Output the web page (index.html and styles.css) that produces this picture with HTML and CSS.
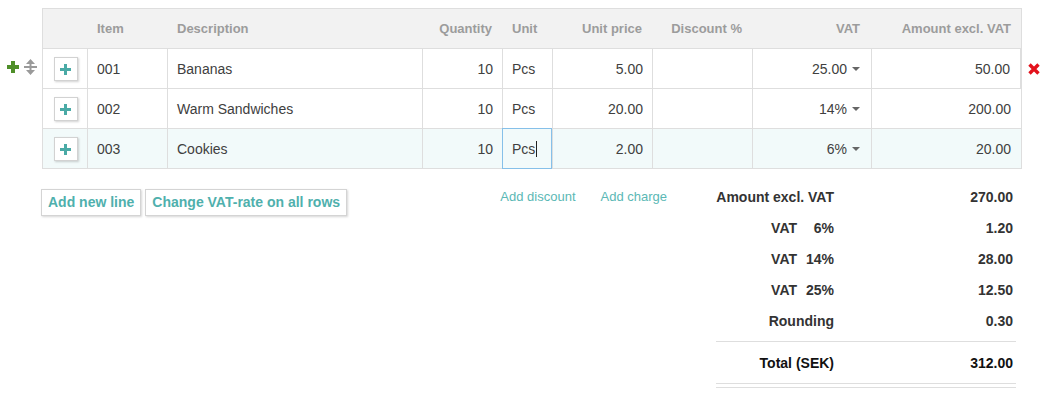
FILE: index.html
```html
<!DOCTYPE html>
<html lang="en">
<head>
<meta charset="utf-8">
<title>Invoice rows</title>
<link rel="stylesheet" href="styles.css">
</head>
<body>
<div class="page">
  <div class="grid">
    <div class="row head">
      <div class="c"></div>
      <div class="c">Item</div>
      <div class="c">Description</div>
      <div class="c r">Quantity</div>
      <div class="c">Unit</div>
      <div class="c r">Unit price</div>
      <div class="c r">Discount %</div>
      <div class="c r vat">VAT</div>
      <div class="c r">Amount excl. VAT</div>
    </div>

    <div class="row line first">
      <div class="tools">
        <svg class="gplus" width="12" height="12" viewBox="0 0 12 12"><path d="M6 0v12M0 6h12" stroke="#4f8f29" stroke-width="4"/></svg>
        <svg class="move" width="15" height="16" viewBox="0 0 15 16"><path d="M7.5 0L12 5H3z M7.5 16L12 11H3z" fill="#9a9a9a"/><rect x="6.5" y="4" width="2" height="8" fill="#9a9a9a"/><rect x="1" y="7" width="13" height="2" fill="#9a9a9a"/></svg>
      </div>
      <div class="c ctr"><span class="addbtn"><svg width="11" height="11" viewBox="0 0 11 11"><path d="M5.5 0v11M0 5.5h11" stroke="#4aaaa6" stroke-width="3"/></svg></span></div>
      <div class="c">001</div>
      <div class="c">Bananas</div>
      <div class="c r">10</div>
      <div class="c">Pcs</div>
      <div class="c r">5.00</div>
      <div class="c r"></div>
      <div class="c r vat">25.00<span class="dd"></span></div>
      <div class="c r">50.00</div>
      <svg class="del" width="12" height="12" viewBox="0 0 12 12"><path d="M1.5 1.5l9 9M10.5 1.5l-9 9" stroke="#e3121c" stroke-width="3.4"/></svg>
    </div>

    <div class="row line">
      <div class="c ctr"><span class="addbtn"><svg width="11" height="11" viewBox="0 0 11 11"><path d="M5.5 0v11M0 5.5h11" stroke="#4aaaa6" stroke-width="3"/></svg></span></div>
      <div class="c">002</div>
      <div class="c">Warm Sandwiches</div>
      <div class="c r">10</div>
      <div class="c">Pcs</div>
      <div class="c r">20.00</div>
      <div class="c r"></div>
      <div class="c r vat">14%<span class="dd"></span></div>
      <div class="c r">200.00</div>
    </div>

    <div class="row line active last">
      <div class="c ctr"><span class="addbtn"><svg width="11" height="11" viewBox="0 0 11 11"><path d="M5.5 0v11M0 5.5h11" stroke="#4aaaa6" stroke-width="3"/></svg></span></div>
      <div class="c">003</div>
      <div class="c">Cookies</div>
      <div class="c r">10</div>
      <div class="c focus">Pcs<span class="cursor"></span></div>
      <div class="c r">2.00</div>
      <div class="c r"></div>
      <div class="c r vat">6%<span class="dd"></span></div>
      <div class="c r">20.00</div>
    </div>
  </div>

  <div class="footer">
    <div class="left">
      <div class="buttons">
        <span class="btn">Add new line</span>
        <span class="btn">Change VAT-rate on all rows</span>
      </div>
      <div class="links">
        <span class="link">Add discount</span>
        <span class="link">Add charge</span>
      </div>
    </div>
    <div class="totals">
      <div class="trow"><div class="lbl">Amount excl. VAT</div><div class="val">270.00</div></div>
      <div class="trow"><div class="lbl">VAT<span class="pct">6%</span></div><div class="val">1.20</div></div>
      <div class="trow"><div class="lbl">VAT<span class="pct">14%</span></div><div class="val">28.00</div></div>
      <div class="trow"><div class="lbl">VAT<span class="pct">25%</span></div><div class="val">12.50</div></div>
      <div class="trow"><div class="lbl">Rounding</div><div class="val">0.30</div></div>
      <div class="trow total"><div class="lbl">Total (SEK)</div><div class="val">312.00</div></div>
      <div class="dbl"></div>
    </div>
  </div>
</div>
</body>
</html>
```

FILE: styles.css
```css
* { box-sizing: border-box; }
html, body { margin: 0; padding: 0; background: #fff; }
body {
  font-family: "Liberation Sans", Arial, sans-serif;
  font-size: 14px;
  color: #404040;
}
.page { padding: 8px 0 0 42px; }

.grid {
  width: 980px;
  border: 1px solid #dedede;
}
.row {
  display: grid;
  grid-template-columns: 45px 80px 255px 80px 50px 100px 100px 119px 149px;
  height: 40px;
  border-bottom: 1px solid #dedede;
  position: relative;
}
.row.last { height: 39px; border-bottom: none; }
.row.head {
  background: #f2f2f2;
}
.c {
  border-right: 1px solid #dedede;
  padding: 0 9px;
  line-height: 40px;
  white-space: nowrap;
  position: relative;
}
.c:last-child { border-right: none; }
.c.r { text-align: right; }
.c.vat { padding-right: 11px; }
.head .c {
  border-right-color: transparent;
  font-size: 13px;
  font-weight: bold;
  color: #9c9c9c;
  line-height: 39px;
}
.head .c.r { padding-right: 10px; }
.head .c.vat { padding-right: 11px; }
.row.line .c.r:last-of-type { padding-right: 10px; }

.row.active { background: #f2fafa; }

.ctr { display: flex; align-items: center; justify-content: center; padding: 0; }
.addbtn {
  width: 24px;
  height: 24px;
  border: 1px solid #d2d2d2;
  background: #fff;
  box-shadow: 1px 1px 2px rgba(0, 0, 0, 0.18);
  display: flex;
  align-items: center;
  justify-content: center;
  margin-left: 1px;
}
.addbtn svg { display: block; }

.dd {
  display: inline-block;
  width: 0;
  height: 0;
  margin-left: 5px;
  vertical-align: middle;
  border-left: 4px solid transparent;
  border-right: 4px solid transparent;
  border-top: 4px solid #666;
  position: relative;
  top: -1px;
}

.focus::after {
  content: "";
  position: absolute;
  top: -1px;
  left: -1px;
  right: 0;
  bottom: 0;
  border: 1px solid #86c0e9;
}
.cursor {
  display: inline-block;
  width: 1px;
  height: 16px;
  background: #222;
  vertical-align: middle;
  margin-left: 1px;
  position: relative;
  top: -1px;
}

.tools {
  position: absolute;
  left: -36px;
  top: 10px;
  display: flex;
  align-items: center;
  gap: 4px;
}
.tools svg { display: block; }
.del {
  position: absolute;
  left: 985px;
  top: 14px;
}

.footer {
  display: flex;
  margin: 13px 0 0 -1px;
}
.left {
  width: 675px;
  display: flex;
  align-items: flex-start;
  padding-right: 49px;
}
.buttons {
  display: flex;
  gap: 4px;
  margin-top: 7px;
}
.btn {
  display: block;
  height: 27px;
  line-height: 25px;
  padding: 0 6px;
  border: 1px solid #d4d4d4;
  box-shadow: 1px 1px 2px rgba(0, 0, 0, 0.16);
  font-weight: bold;
  font-size: 14px;
  color: #4fb0ad;
  background: #fff;
}
.links {
  margin-left: auto;
  margin-top: 7px;
  display: flex;
  gap: 25px;
}
.link {
  font-size: 13px;
  line-height: 16px;
  color: #5bb8b5;
}

.totals {
  width: 300px;
  color: #333;
  font-weight: bold;
}
.trow {
  display: grid;
  grid-template-columns: 118px 1fr;
  height: 31px;
  line-height: 31px;
}
.lbl { text-align: right; white-space: nowrap; }
.val { text-align: right; padding-right: 3px; }
.pct { display: inline-block; width: 33px; margin-left: 4px; text-align: right; }
.trow.total {
  margin-top: 4px;
  height: 43px;
  padding-top: 1px;
  line-height: 41px;
  border-top: 1px solid #dedede;
  border-bottom: 1px solid #dedede;
  color: #111;
}
.dbl {
  margin-top: 3px;
  border-top: 1px solid #dedede;
}
```
